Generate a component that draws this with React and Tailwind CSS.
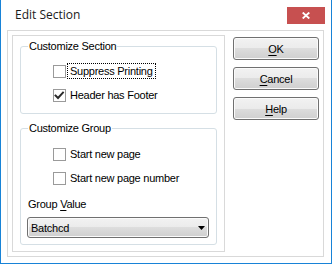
import React from "react";

function CheckBox({ checked }) {
  return (
    <div className="w-[13px] h-[13px] border border-[#9a9a9a] bg-white flex items-center justify-center shrink-0">
      {checked && (
        <svg width="11" height="11" viewBox="0 0 11 11">
          <path d="M1.5 5.5 L4 8 L9 2.5" fill="none" stroke="#2a2a2a" strokeWidth="1.9" strokeLinecap="square" />
        </svg>
      )}
    </div>
  );
}

function Row({ checked, children }) {
  return (
    <div className="h-[16px] flex items-center pl-[32px] gap-[4px]">
      <CheckBox checked={checked} />
      {children}
    </div>
  );
}

function Btn({ u, rest }) {
  return (
    <div className="h-[23px] border border-[#707070] rounded-[3px] bg-[linear-gradient(#f2f2f2,#ebebeb_50%,#dddddd_50%,#cfcfcf)] shadow-[inset_0_0_0_1px_#fbfbfb] flex items-center justify-center leading-[16px]">
      <span>
        <span className="underline underline-offset-[2px]">{u}</span>
        {rest}
      </span>
    </div>
  );
}

export default function App() {
  return (
    <div className="w-[332px] h-[264px] bg-white border-x border-b border-[#1883d7] flex flex-col text-black font-['Liberation_Sans',Arial,sans-serif] text-[11px] tracking-[-0.25px]">
      <div className="h-[30px] flex justify-between shrink-0">
        <div className="pl-[14px] pt-[7px] leading-[16px] text-[12px] tracking-normal font-['Open_Sans',sans-serif] text-[#1b1b1b]">
          Edit Section
        </div>
        <div className="mt-[7px] mr-[6px] w-[38px] h-[17px] bg-[#c75050] flex items-center justify-center">
          <svg width="8" height="7" viewBox="0 0 8 7">
            <path d="M0.7 0.5 L7.3 6.5 M7.3 0.5 L0.7 6.5" stroke="white" strokeWidth="1.8" fill="none" />
          </svg>
        </div>
      </div>
      <div className="flex-1 pl-[6px] pr-[7px] pb-[6px] flex">
        <div className="flex-1 border border-[#d9d9d9] p-[4px] flex gap-[8px]">
          <div className="w-[213px] border border-[#d9d9d9] px-[7px] pt-[10px] pb-[6px] flex flex-col">
            <div className="relative h-[68px] border border-[#d5dfe5] rounded-[3px] pt-[16px] flex flex-col gap-[8px]">
              <div className="absolute -top-[7px] left-[7px] px-[1px] bg-white leading-[13px]">Customize Section</div>
              <Row>
                <span className="border border-dotted border-black px-[2px] leading-[14px] -ml-[3px]">Suppress Printing</span>
              </Row>
              <Row checked>
                <span className="leading-[16px]">Header has Footer</span>
              </Row>
            </div>
            <div className="relative mt-[14px] h-[117px] border border-[#d5dfe5] rounded-[3px] pt-[17px] flex flex-col">
              <div className="absolute -top-[7px] left-[7px] px-[1px] bg-white leading-[13px]">Customize Group</div>
              <Row>
                <span className="leading-[16px]">Start new page</span>
              </Row>
              <div className="h-[8px]" />
              <Row>
                <span className="leading-[16px]">Start new page number</span>
              </Row>
              <div className="h-[10px] shrink-0" />
              <div className="h-[16px] leading-[16px] pl-[7px]">
                Group <span className="underline underline-offset-[2px]">V</span>alue
              </div>
              <div className="h-[5px] shrink-0" />
              <div className="ml-[6px] w-[182px] h-[21px] border border-[#707070] rounded-[3px] bg-[linear-gradient(#f2f2f2,#ebebeb_50%,#dddddd_50%,#cfcfcf)] shadow-[inset_0_0_0_1px_#fbfbfb] flex items-center justify-between pl-[3px] pr-[3px]">
                <span className="leading-[16px]">Batchcd</span>
                <svg width="7" height="4" viewBox="0 0 7 4">
                  <path d="M0 0 L7 0 L3.5 4 Z" fill="#000" />
                </svg>
              </div>
            </div>
          </div>
          <div className="w-[86px] pt-[2px] flex flex-col gap-[7px]">
            <Btn u="O" rest="K" />
            <Btn u="C" rest="ancel" />
            <Btn u="H" rest="elp" />
          </div>
        </div>
      </div>
    </div>
  );
}
